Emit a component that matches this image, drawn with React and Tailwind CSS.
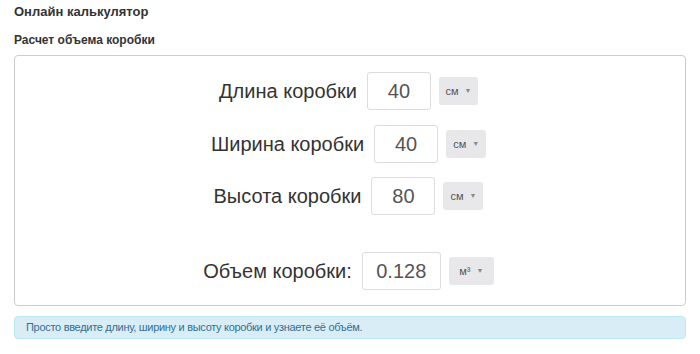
import React from "react";

function UnitSelect({ unit, width }) {
  return (
    <div
      className={`flex h-[28px] ${width} items-center justify-center gap-[6px] rounded-[3px] bg-[#e8e8ea] text-[11px] text-[#555]`}
    >
      <span>{unit}</span>
      <span className="text-[7px] text-[#888]">▼</span>
    </div>
  );
}

function Row({ label, value, unit, inputWidth = "w-[64px]", selectWidth = "w-[39px]", className = "" }) {
  return (
    <div className={`flex items-center justify-center ${className}`}>
      <span className="text-[20px] text-[#333]">{label}</span>
      <div className={`ml-[10px] flex h-[38px] ${inputWidth} items-center justify-center rounded-[3px] border border-[#dcdcdc] bg-white text-[20px] text-[#555]`}>
        {value}
      </div>
      <div className="ml-[8px]">
        <UnitSelect unit={unit} width={selectWidth} />
      </div>
    </div>
  );
}

export default function App() {
  return (
    <div className="h-[354px] w-[700px] bg-white px-[14px] pt-[3px] font-['Liberation_Sans',Arial,sans-serif] text-[#333]">
      <h2 className="text-[13px] font-bold leading-[18px]">Онлайн калькулятор</h2>
      <h3 className="mt-[11px] text-[12px] font-bold leading-[16px]">Расчет объема коробки</h3>

      <div className="mt-[7px] flex h-[251px] flex-col rounded-[4px] border border-[#ccc] pr-[3px] pt-[16px]">
        <Row label="Длина коробки" value="40" unit="см" />
        <Row label="Ширина коробки" value="40" unit="см" selectWidth="w-[40px]" className="mt-[15px]" />
        <Row label="Высота коробки" value="80" unit="см" selectWidth="w-[40px]" className="mt-[14px]" />
        <Row
          label="Объем коробки:"
          value="0.128"
          unit={<span>м³</span>}
          inputWidth="w-[79px]"
          selectWidth="w-[45px]"
          className="mt-[37px]"
        />
      </div>

      <div className="mt-[10px] flex h-[23px] items-center rounded-[4px] border border-[#bce8f1] bg-[#d9edf7] px-[11px] text-[11px] tracking-[-0.3px] text-[#31708f]">
        Просто введите длину, ширину и высоту коробки и узнаете её объём.
      </div>
    </div>
  );
}
